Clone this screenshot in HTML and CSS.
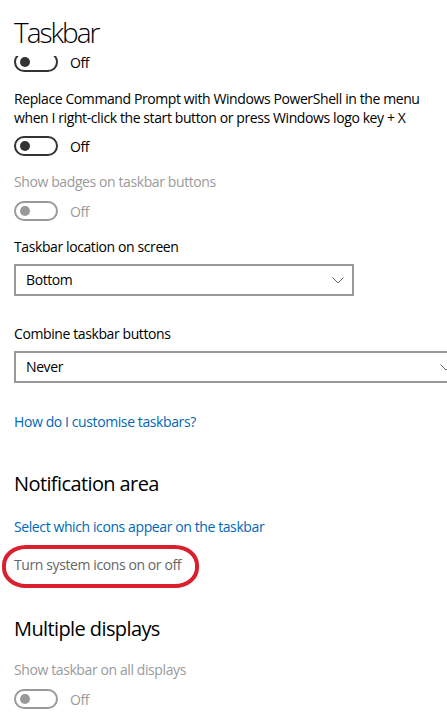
FILE: index.html
```html
<!DOCTYPE html>
<html lang="en">
<head>
    <meta charset="UTF-8">
    <meta name="viewport" content="width=device-width, initial-scale=1.0">
    <title>Taskbar</title>
    <link rel="stylesheet" href="styles.css">
</head>
<body>

<div class="header">
    <h1>Taskbar</h1>
</div>

<div class="scroll">
    <div class="content">
        <div class="toggle-row first">
            <span class="toggle"><span class="knob"></span></span>
            <span class="state">Off</span>
        </div>

        <p class="label replace">Replace Command Prompt with Windows PowerShell in the menu<br>when I right-click the start button or press Windows logo key + X</p>
        <div class="toggle-row gap-small">
            <span class="toggle"><span class="knob"></span></span>
            <span class="state">Off</span>
        </div>

        <p class="label disabled gap-label">Show badges on taskbar buttons</p>
        <div class="toggle-row disabled gap-toggle">
            <span class="toggle"><span class="knob"></span></span>
            <span class="state">Off</span>
        </div>

        <p class="label gap-label">Taskbar location on screen</p>
        <div class="select short">
            <span>Bottom</span>
            <svg class="chevron" width="12" height="7" viewBox="0 0 12 7"><polyline points="0.5,0.5 6,6 11.5,0.5" fill="none" stroke="#666" stroke-width="1"/></svg>
        </div>

        <p class="label gap-section">Combine taskbar buttons</p>
        <div class="select wide">
            <span>Never</span>
            <svg class="chevron" width="12" height="7" viewBox="0 0 12 7"><polyline points="0.5,0.5 6,6 11.5,0.5" fill="none" stroke="#666" stroke-width="1"/></svg>
        </div>

        <p class="label link gap-link">How do I customise taskbars?</p>

        <h2 class="gap-heading">Notification area</h2>
        <p class="label link gap-sub">Select which icons appear on the taskbar</p>
        <div class="circled">
            <span class="label muted">Turn system icons on or off</span>
        </div>

        <h2 class="gap-heading2">Multiple displays</h2>
        <p class="label disabled gap-sub2">Show taskbar on all displays</p>
        <div class="toggle-row disabled gap-toggle">
            <span class="toggle"><span class="knob"></span></span>
            <span class="state">Off</span>
        </div>
    </div>
</div>

</body>
</html>
```

FILE: styles.css
```css
html, body {
    overflow: hidden;
}
body {
    margin: 0;
    padding: 0;
    background-color: #fff;
    color: #000;
    font-family: "Open Sans", "Noto Sans", sans-serif;
    font-size: 14px;
    letter-spacing: -0.4px;
}
.header {
    height: 56px;
    padding: 13px 0 0 14px;
    box-sizing: border-box;
    background-color: #fff;
}
h1 {
    margin: 0;
    font-size: 28px;
    font-weight: 300;
    line-height: 38px;
    letter-spacing: -2px;
}
.scroll {
    height: 657px;
    overflow: hidden;
}
.content {
    margin-top: -4px;
    padding-left: 14px;
    width: 470px;
}
.label {
    margin: 0;
    line-height: 19px;
}
.replace {
    margin-top: 17px;
    white-space: nowrap;
}
.toggle-row {
    display: flex;
    align-items: center;
    gap: 12px;
    height: 20px;
}
.toggle {
    box-sizing: border-box;
    width: 44px;
    height: 20px;
    border: 2px solid #333;
    border-radius: 10px;
    display: flex;
    align-items: center;
    padding-left: 4px;
}
.knob {
    width: 10px;
    height: 10px;
    border-radius: 50%;
    background-color: #333;
}
.state {
    line-height: 19px;
}
.disabled {
    color: #9a9a9a;
}
.toggle-row.disabled .toggle {
    border-color: #999;
}
.toggle-row.disabled .knob {
    background-color: #999;
}
.gap-small {
    margin-top: 9px;
}
.gap-label {
    margin-top: 16px;
}
.gap-toggle {
    margin-top: 10px;
}
.select {
    box-sizing: border-box;
    height: 32px;
    margin-top: 8px;
    border: 2px solid #999;
    padding: 0 8px 0 10px;
    display: flex;
    align-items: center;
    justify-content: space-between;
    line-height: 28px;
}
.select.short {
    width: 340px;
}
.select.wide {
    width: 448px;
}
.chevron {
    margin-top: 1px;
}
.gap-section {
    margin-top: 28px;
}
.link {
    color: #0067b8;
}
.gap-link {
    margin-top: 29px;
}
h2 {
    margin: 0;
    font-size: 20px;
    font-weight: 400;
    line-height: 27px;
    letter-spacing: -0.6px;
}
.gap-heading {
    margin-top: 39px;
}
.gap-sub {
    margin-top: 20px;
}
.circled {
    display: inline-block;
    margin: 9px 0 0 -12px;
    padding: 6px 14px 10px 8px;
    border: 4px solid #d9202c;
    border-radius: 24px / 20px;
}
.muted {
    color: #666;
    display: block;
}
.gap-heading2 {
    margin-top: 27px;
}
.gap-sub2 {
    margin-top: 18px;
}
```
